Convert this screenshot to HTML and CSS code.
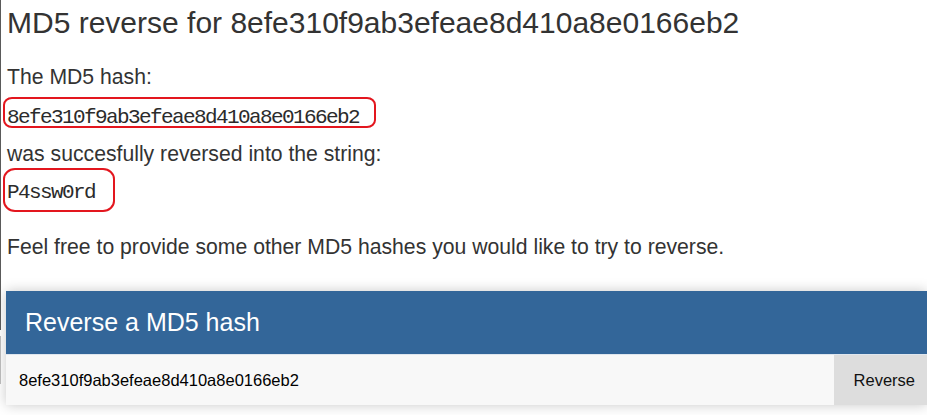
FILE: index.html
```html
<!DOCTYPE html>
<html lang="en">
<head>
<meta charset="utf-8">
<title>MD5 reverse for 8efe310f9ab3efeae8d410a8e0166eb2</title>
<link rel="stylesheet" href="styles.css">
</head>
<body>
<main class="page">
  <h1 class="title">MD5 reverse for 8efe310f9ab3efeae8d410a8e0166eb2</h1>
  <p class="text first">The MD5 hash:</p>
  <p class="mono hash-line"><span class="ring ring-hash">8efe310f9ab3efeae8d410a8e0166eb2</span></p>
  <p class="text was">was succesfully reversed into the string:</p>
  <p class="mono plain-line"><span class="ring ring-plain">P4ssw0rd</span></p>
  <p class="text feel">Feel free to provide some other MD5 hashes you would like to try to reverse.</p>

  <form class="panel" onsubmit="return false">
    <div class="panel-head">Reverse a MD5 hash</div>
    <div class="panel-body">
      <input class="hash-input" type="text" value="8efe310f9ab3efeae8d410a8e0166eb2">
      <button class="reverse-btn" type="submit">Reverse</button>
    </div>
  </form>
</main>
</body>
</html>
```

FILE: styles.css
```css
html, body {
  margin: 0;
  padding: 0;
  background: #ffffff;
}

body {
  position: relative;
  width: 927px;
  height: 415px;
  overflow: hidden;
  font-family: "Liberation Sans", Arial, sans-serif;
  color: #333333;
}

body::before {
  content: "";
  position: absolute;
  left: 0;
  top: 0;
  width: 1px;
  height: 330px;
  background: #5a5a5a;
}

body::after {
  content: "";
  position: absolute;
  left: 0;
  top: 336px;
  width: 1px;
  height: 48px;
  background: #b8b8b8;
}

.page {
  padding-left: 7px;
}

.title {
  margin: 6px 0 0;
  font-size: 30px;
  line-height: 33px;
  font-weight: normal;
  color: #333333;
}

.text {
  margin: 0;
  font-size: 21.2px;
  line-height: 30px;
}

.first { margin-top: 23px; }
.was { margin-top: 6px; }
.feel { margin-top: 24px; }

.mono {
  margin: 0;
  font-family: "Liberation Mono", "Courier New", monospace;
  font-size: 21px;
  letter-spacing: -1.6px;
  line-height: 30px;
  color: #2b2b2b;
}

.hash-line { margin-top: 11px; }
.plain-line { margin-top: 9px; }

.ring {
  position: relative;
  display: inline-block;
}

.ring::after {
  content: "";
  position: absolute;
  border: 2.5px solid #e3161e;
  box-sizing: border-box;
}

.ring-hash::after {
  left: -4px;
  right: -17px;
  top: -6px;
  bottom: 5px;
  border-radius: 9px / 8px;
}

.ring-plain::after {
  left: -4px;
  right: -20px;
  top: -10px;
  bottom: -4px;
  border-radius: 12px / 11px;
}

.panel {
  margin: 29px 0 0 -1px;
  box-shadow: 0 0 12px rgba(0, 0, 0, 0.22);
}

.panel-head {
  height: 63px;
  line-height: 63px;
  padding-left: 19px;
  background: #336699;
  color: #ffffff;
  font-size: 25px;
  border-bottom: 1px solid #dfe6ee;
}

.panel-body {
  display: flex;
  height: 50px;
  background: #f8f8f8;
}

.hash-input {
  flex: 1;
  min-width: 0;
  height: 50px;
  margin: 0;
  padding: 0 13px;
  border: none;
  outline: none;
  background: #f8f8f8;
  color: #000000;
  font-family: "Liberation Sans", Arial, sans-serif;
  font-size: 16.5px;
}

.reverse-btn {
  height: 50px;
  margin: 0;
  padding: 0 12px 0 20px;
  border: none;
  background: #dddddd;
  color: #111111;
  font-family: "Liberation Sans", Arial, sans-serif;
  font-size: 16.5px;
  cursor: pointer;
}
```
